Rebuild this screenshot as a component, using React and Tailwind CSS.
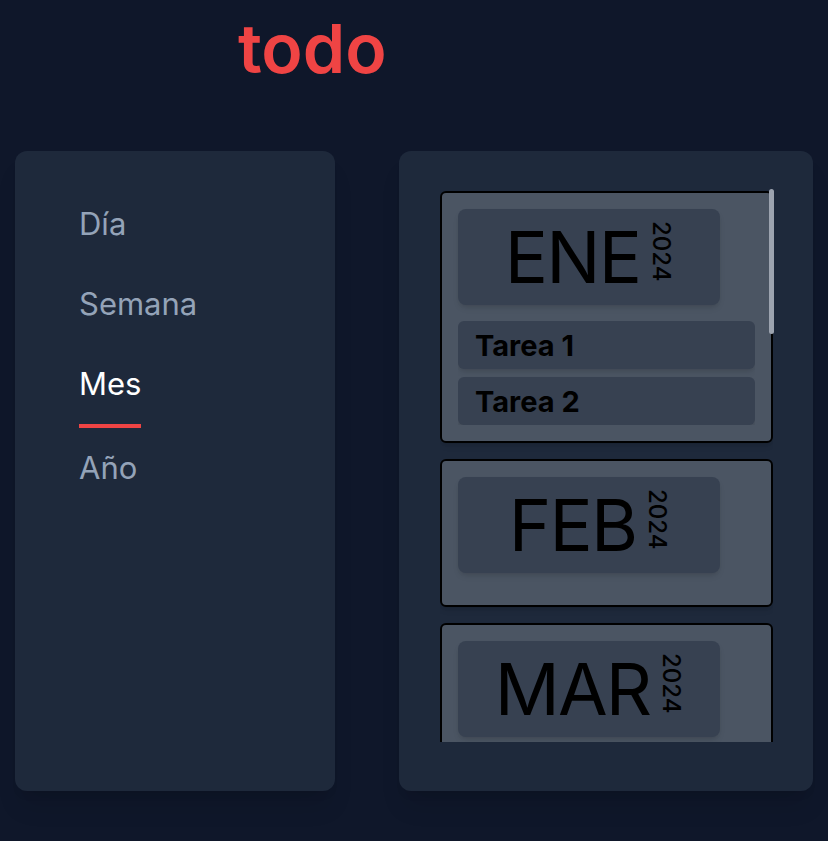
import React, { useState } from "react";

const views = ["Día", "Semana", "Mes", "Año"];

const months = [
  { name: "ENE", year: 2024, tasks: ["Tarea 1", "Tarea 2"] },
  { name: "FEB", year: 2024, tasks: [] },
  { name: "MAR", year: 2024, tasks: [] },
];

const MonthCard = ({ month }) => (
  <div className="shrink-0 rounded-md border-2 border-black bg-[#4b5563] p-4 shadow-md">
    <div className="flex w-[262px] justify-center rounded-lg bg-[#374151] py-3 shadow-md">
      <span className="text-[72px] leading-none tracking-tight text-black">{month.name}</span>
      <span className="ml-[9px] text-[24px] font-medium leading-none text-black [writing-mode:vertical-rl]">
        {month.year}
      </span>
    </div>
    <div className="mt-4 flex max-h-[104px] flex-col gap-2 overflow-hidden">
      {month.tasks.map((t) => (
        <div
          key={t}
          className="flex h-12 shrink-0 items-center rounded-md bg-[#374151] px-[17px] shadow-md"
        >
          <span className="text-[29px] font-bold leading-none text-black">{t}</span>
        </div>
      ))}
    </div>
  </div>
);

export default function App() {
  const [view, setView] = useState("Mes");

  return (
    <div className="min-h-[841px] bg-[#0f172a] pt-[14px] font-['Inter',sans-serif]">
      {/* Header */}
      <h1 className="pl-[238px] text-[68px] font-semibold leading-none text-[#ef4444]">todo</h1>

      <div className="mt-[69px] flex gap-16 pl-[15px]">
        {/* Sidebar */}
        <nav className="h-[640px] w-[320px] rounded-xl bg-[#1e293b] pl-16 pt-[33px] shadow-xl">
          <ul className="flex flex-col items-start">
            {views.map((v) => (
              <li key={v}>
                <button
                  type="button"
                  onClick={() => setView(v)}
                  className={`py-[22px] text-[31px] leading-9 ${
                    view === v
                      ? "border-b-4 border-[#ef4444] text-white"
                      : "text-[#94a3b8]"
                  }`}
                >
                  {v}
                </button>
              </li>
            ))}
          </ul>
        </nav>

        {/* Month list */}
        <section className="relative h-[640px] w-[414px] rounded-xl bg-[#1e293b] pl-[41px] pr-10 pt-10 shadow-xl">
          <div className="flex h-[551px] flex-col gap-4 overflow-y-auto [scrollbar-width:none]">
            {months.map((m) => (
              <MonthCard key={m.name} month={m} />
            ))}
          </div>
          {/* overlay scrollbar thumb */}
          <div className="absolute left-[370px] top-[38px] h-[145px] w-[5px] rounded-full bg-[#9ca3af]" />
        </section>
      </div>
    </div>
  );
}
